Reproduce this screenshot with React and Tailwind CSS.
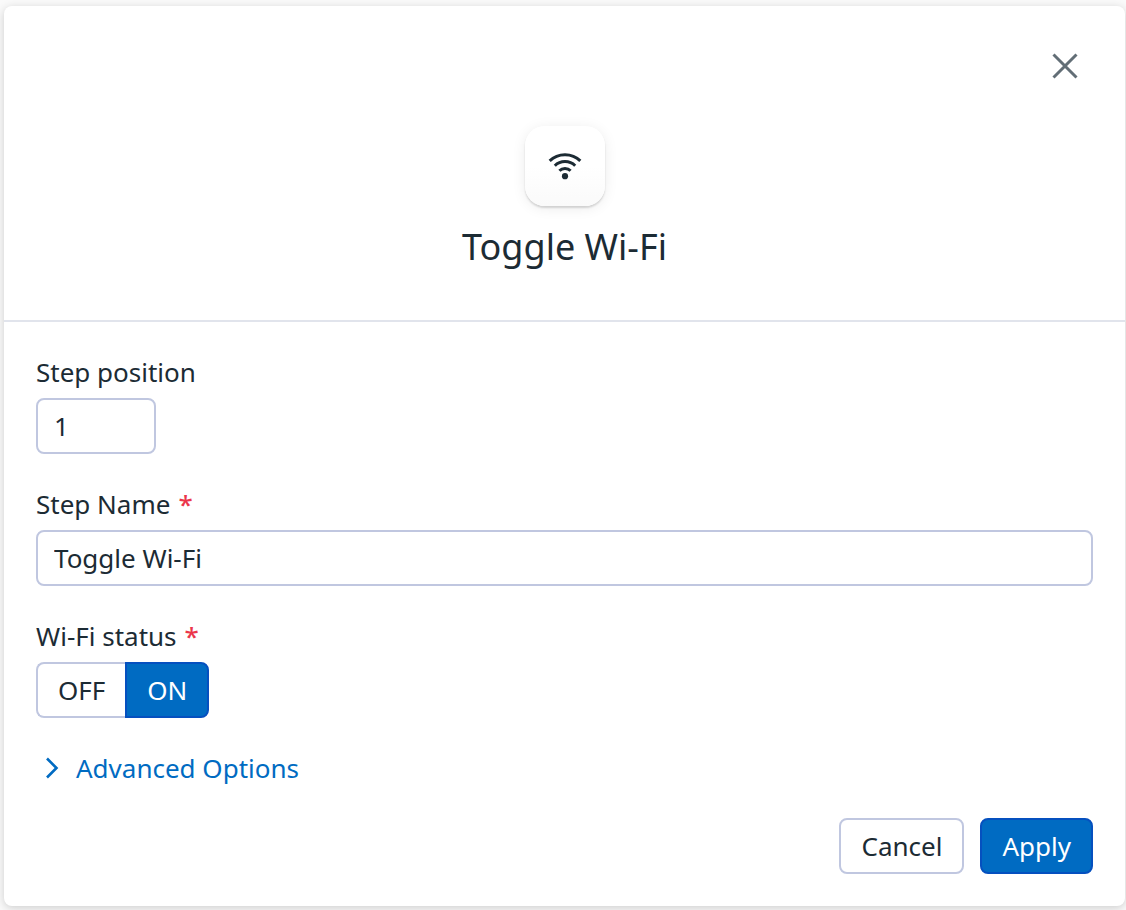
import { useState } from "react";

const outlined = "border-2 border-[#c0c7e0] bg-white text-[#1c2b34]";
const filled = "border-2 border-[#0550bf] bg-[#006bc2] text-white";

function CloseIcon() {
  return (
    <svg viewBox="0 0 56 56" className="size-14" fill="none" stroke="#626e76" strokeWidth="3" aria-hidden="true">
      <path d="M16.5 16.5 39.5 39.5M39.5 16.5 16.5 39.5" />
    </svg>
  );
}

function WifiIcon() {
  return (
    <svg viewBox="0 0 80 80" className="size-20" fill="none" stroke="#1c2b34" strokeWidth="3" aria-hidden="true">
      <path d="M24.7 34.9C33 26.6 47 26.6 55.3 34.9" />
      <path d="M29.8 39.8C35.4 34.2 44.6 34.2 50.2 39.8" />
      <path d="M34.4 44.7C37.4 41.7 42.6 41.7 45.6 44.7" />
      <circle cx="40" cy="50.2" r="3.1" fill="#1c2b34" stroke="none" />
    </svg>
  );
}

function Field({ id, label, required, children }) {
  return (
    <div className="flex flex-col gap-2">
      <label htmlFor={id}>
        {label}
        {required && <span className="ml-2 font-medium text-[#eb364b]">*</span>}
      </label>
      {children}
    </div>
  );
}

export default function App() {
  const [position, setPosition] = useState("1");
  const [name, setName] = useState("Toggle Wi-Fi");
  const [on, setOn] = useState(true);

  return (
    <div className="min-h-screen bg-[#fafafa] pt-1.5 pr-px pb-1 pl-1 font-['Noto_Sans',sans-serif] text-[26px] leading-9 text-[#1c2b34]">
      <div role="dialog" aria-labelledby="dialog-title" className="rounded-lg bg-white shadow-[0_2px_10px_rgba(0,0,0,0.18)]">
        <header className="flex flex-col items-center border-b-2 border-[#e1e4ec] px-8 pt-8 pb-12">
          <button type="button" aria-label="Close" className="self-end">
            <CloseIcon />
          </button>
          <div className="mt-8 rounded-[20px] bg-linear-to-b from-white from-50% to-[#fafafa] shadow-[0_2px_2px_rgba(0,0,0,0.14),0_2px_14px_rgba(0,0,0,0.08)]">
            <WifiIcon />
          </div>
          <h1 id="dialog-title" className="mt-4 text-4xl leading-[50px]">Toggle Wi-Fi</h1>
        </header>
        <form className="flex flex-col items-start gap-8 p-8" onSubmit={(e) => e.preventDefault()}>
          <Field id="position" label="Step position">
            <input
              id="position"
              value={position}
              onChange={(e) => setPosition(e.target.value)}
              className={"h-14 w-30 rounded-lg px-4 " + outlined}
            />
          </Field>
          <div className="w-full">
            <Field id="name" label="Step Name" required>
              <input
                id="name"
                required
                value={name}
                onChange={(e) => setName(e.target.value)}
                className={"h-14 w-full rounded-lg px-4 " + outlined}
              />
            </Field>
          </div>
          <Field id="status-on" label="Wi-Fi status" required>
            <div className="flex">
              <button
                type="button"
                aria-pressed={!on}
                onClick={() => setOn(false)}
                className={"h-14 rounded-l-lg border-r-0 px-5 " + (on ? outlined : filled)}
              >
                OFF
              </button>
              <button
                id="status-on"
                type="button"
                aria-pressed={on}
                onClick={() => setOn(true)}
                className={"h-14 rounded-r-lg px-5 " + (on ? filled : outlined)}
              >
                ON
              </button>
            </div>
          </Field>
          <button type="button" aria-expanded="false" className="flex items-center gap-2 text-[#006bc2]">
            <svg viewBox="0 0 32 32" className="size-8" fill="none" stroke="currentColor" strokeWidth="2.6" aria-hidden="true">
              <path d="M11 6.5 20.5 16 11 25.5" />
            </svg>
            Advanced Options
          </button>
          <div className="flex gap-4 self-end">
            <button type="button" className={"h-14 rounded-lg px-5 " + outlined}>Cancel</button>
            <button type="submit" className={"h-14 rounded-lg px-5 " + filled}>Apply</button>
          </div>
        </form>
      </div>
    </div>
  );
}
